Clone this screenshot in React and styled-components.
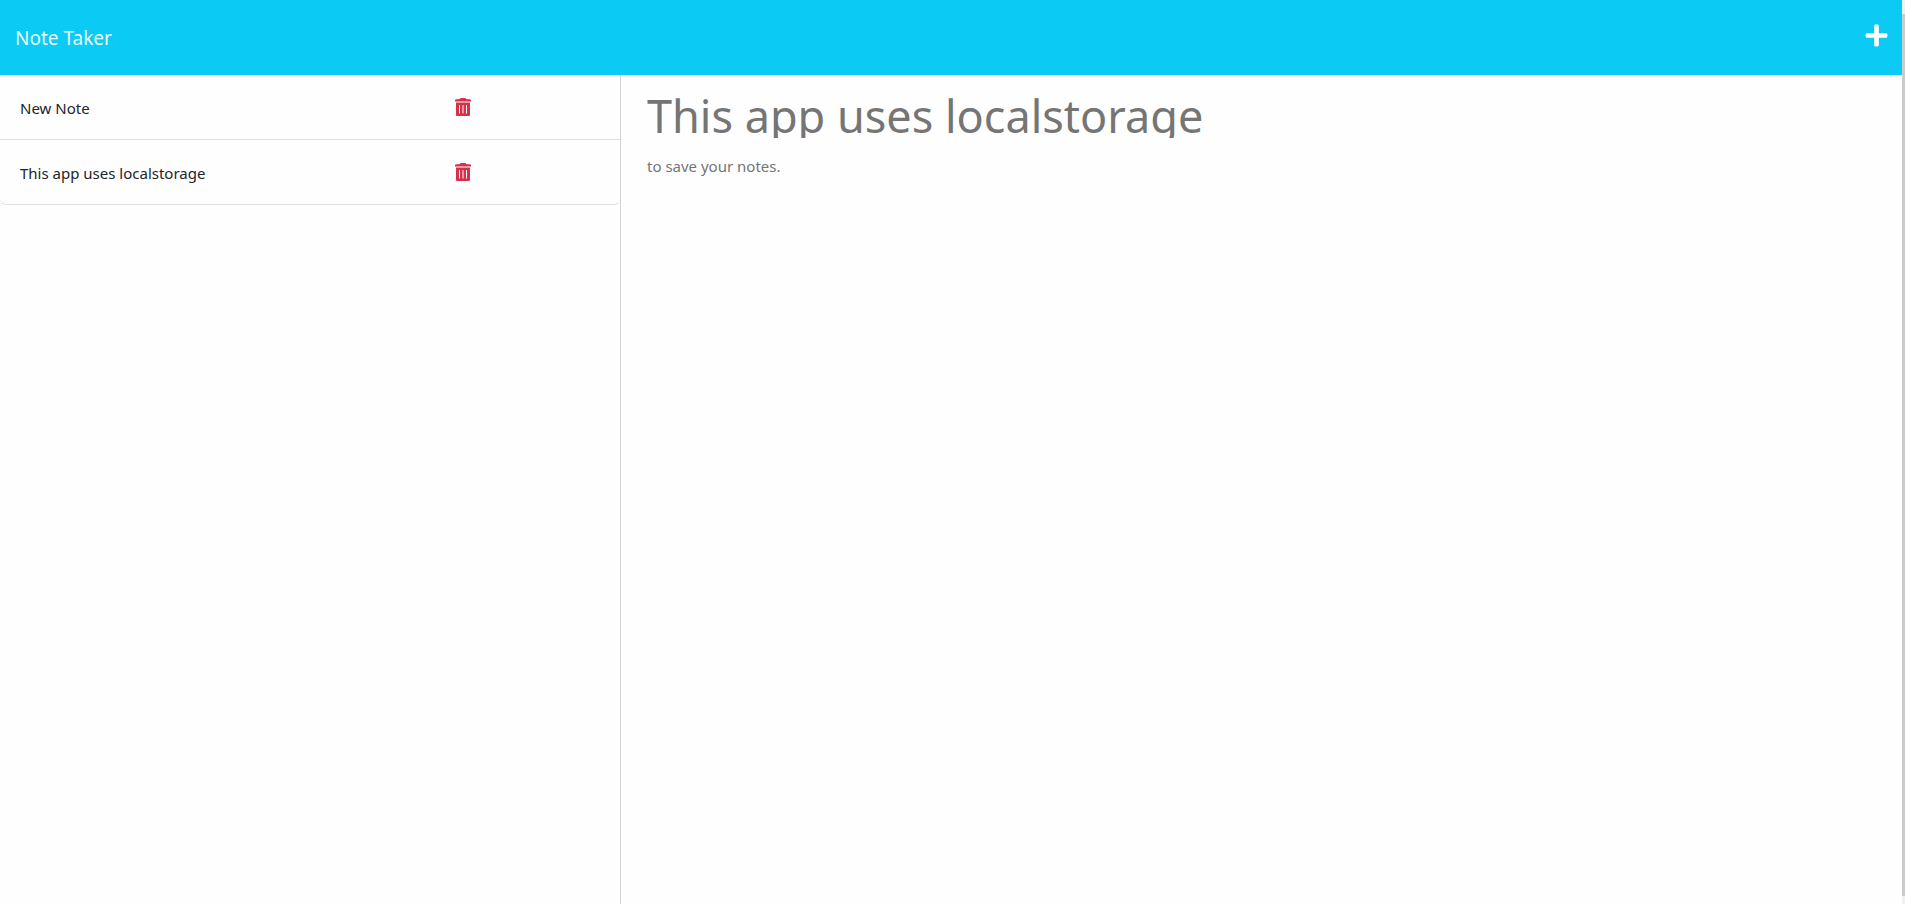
import React, { useState } from 'react';
import styled, { createGlobalStyle } from 'styled-components';
import { FaPlus } from 'react-icons/fa';

const GlobalStyle = createGlobalStyle`
  *, *::before, *::after { box-sizing: border-box; }
  body {
    margin: 0;
    background: #fefefe;
    color: #212529;
    font-family: 'Segoe UI', 'Noto Sans', sans-serif;
    font-size: 15px;
    line-height: 24px;
  }
`;

const Page = styled.div`
  display: flex;
  height: 100vh;
`;

const Main = styled.div`
  flex: 1;
  min-width: 0;
  display: flex;
  flex-direction: column;
`;

const ScrollTrack = styled.div`
  flex: none;
  width: 3px;
  padding: 14px 0 8px;
  background: #f1f1f1;
`;

const ScrollThumb = styled.div`
  height: 100%;
  background: #cbcbcd;
`;

const Header = styled.header`
  display: flex;
  justify-content: space-between;
  align-items: center;
  height: 75px;
  padding: 0 13px 0 15px;
  background: #0bcbf5;
`;

const Brand = styled.a`
  color: #e9fbff;
  font-size: 19px;
  text-decoration: none;
`;

const IconButton = styled.button`
  display: flex;
  padding: 0 0 2px;
  border: 0;
  background: none;
  color: ${(p) => (p.$danger ? '#d6304a' : '#fff')};
  font-size: ${(p) => (p.$danger ? 18 : 25)}px;
  cursor: pointer;
`;

const AddButton = styled(IconButton)`
  padding-bottom: 5px;
`;

const Columns = styled.main`
  flex: 1;
  display: flex;
`;

const Sidebar = styled.aside`
  width: 32.65%;
  border-right: 1px solid #d2d2d8;
`;

const NoteList = styled.ul`
  margin: 0;
  padding: 0;
  list-style: none;
`;

const NoteItem = styled.li`
  display: grid;
  grid-template-columns: 3fr 1fr;
  align-items: center;
  height: 65px;
  padding: 2px 20px 0;
  border-bottom: 1px solid #dddfe2;

  &:last-child {
    border-radius: 0 0 6px 6px;
  }
`;

const NoteTitle = styled.span`
  color: #212529;
`;

const TrashSvg = styled.svg`
  width: 16px;
  height: 18px;
`;

const Editor = styled.section`
  flex: 1;
  display: flex;
  flex-direction: column;
  padding: 15px 26px 0;
`;

const TitleInput = styled.input`
  width: 100%;
  height: 48px;
  padding: 2px 0 0;
  border: 0;
  outline: 0;
  background: none;
  color: #757575;
  font: inherit;
  font-size: 45px;
  line-height: 46px;
`;

const BodyInput = styled.textarea`
  flex: 1;
  width: 100%;
  margin-top: 16px;
  padding: 0;
  border: 0;
  outline: 0;
  resize: none;
  background: none;
  color: #757575;
  font: inherit;
`;

function TrashIcon() {
  return (
    <TrashSvg viewBox="0 0 16 18" aria-hidden="true">
      <path
        fill="currentColor"
        d="M1 1.3Q3.5 1.2 4.8 1L5.3.3Q5.5 0 5.9 0H10.1Q10.5 0 10.7.3L11.2 1Q12.5 1.2 15 1.3Q16 1.5 16 2.4V3.4H0V2.4Q0 1.5 1 1.3Z"
      />
      <path
        fill="currentColor"
        fillRule="evenodd"
        d="M1 4.5H15V17Q15 18 14 18H2Q1 18 1 17ZM4 7V15.5H5V7ZM7.5 7V15.5H8.5V7ZM11 7V15.5H12V7Z"
      />
    </TrashSvg>
  );
}

const initialNotes = [
  { id: 1, title: 'New Note' },
  { id: 2, title: 'This app uses localstorage' },
];

export default function App() {
  const [notes, setNotes] = useState(initialNotes);
  const addNote = () => setNotes([{ id: Date.now(), title: 'New Note' }, ...notes]);
  const removeNote = (id) => setNotes(notes.filter((n) => n.id !== id));

  return (
    <Page>
      <GlobalStyle />
      <Main>
        <Header>
          <Brand href="#">Note Taker</Brand>
          <AddButton type="button" aria-label="Add note" onClick={addNote}>
            <FaPlus />
          </AddButton>
        </Header>
        <Columns>
          <Sidebar>
            <NoteList>
              {notes.map((note) => (
                <NoteItem key={note.id}>
                  <NoteTitle>{note.title}</NoteTitle>
                  <IconButton
                    $danger
                    type="button"
                    aria-label={`Delete ${note.title}`}
                    onClick={() => removeNote(note.id)}
                  >
                    <TrashIcon />
                  </IconButton>
                </NoteItem>
              ))}
            </NoteList>
          </Sidebar>
          <Editor>
            <TitleInput aria-label="Note title" defaultValue="This app uses localstorage" />
            <BodyInput aria-label="Note text" defaultValue="to save your notes." />
          </Editor>
        </Columns>
      </Main>
      <ScrollTrack>
        <ScrollThumb />
      </ScrollTrack>
    </Page>
  );
}
